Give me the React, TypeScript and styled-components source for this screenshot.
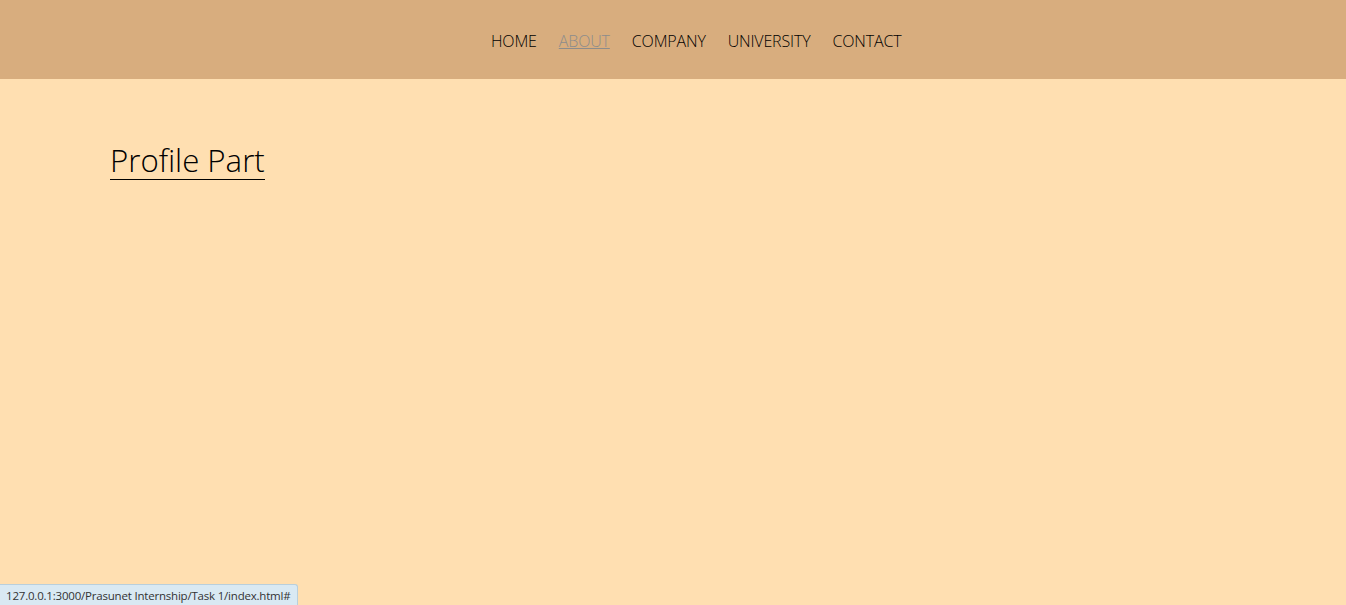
import React from "react";
import styled, { createGlobalStyle } from "styled-components";

const Global = createGlobalStyle`
  html, body { margin: 0; padding: 0; }
  body {
    background: #ffdfb1;
    font-family: "Open Sans", "Segoe UI", sans-serif;
    font-weight: 300;
    color: #000;
    min-height: 605px;
  }
`;

const Header = styled.header`
  height: 79px;
  background: #d8ad7e;
  display: flex;
  align-items: center;
  padding-left: 491px;
  box-sizing: border-box;
`;

const Nav = styled.nav`
  display: flex;
  gap: 22px;
  margin-top: 3px;
`;

const NavLink = styled.a<{ $active?: boolean }>`
  font-family: "Open Sans", sans-serif;
  font-weight: 300;
  font-size: 16px;
  letter-spacing: -0.15px;
  color: ${(p) => (p.$active ? "#8c8c8c" : "#000")};
  text-decoration: ${(p) => (p.$active ? "underline" : "none")};
  cursor: pointer;
`;

const Main = styled.main`
  padding: 62px 0 0 110px;
`;

const Title = styled.h1`
  display: inline-block;
  margin: 0;
  font-family: "Open Sans", sans-serif;
  font-weight: 300;
  font-size: 31.2px;
  letter-spacing: 0;
  line-height: 38px;
  border-bottom: 1px solid #000;
`;

const Status = styled.div`
  position: fixed;
  left: 0;
  bottom: 0;
  height: 20px;
  padding: 0 6px;
  display: flex;
  align-items: center;
  background: #d9e9f3;
  border: 1px solid #b9cfdc;
  border-left: none;
  border-bottom: none;
  border-top-right-radius: 3px;
  font-family: "Open Sans", sans-serif;
  font-weight: 400;
  font-size: 11.5px;
  letter-spacing: -0.2px;
  color: #333;
`;

export default function App() {
  return (
    <>
      <Global />
      <Header>
        <Nav>
          <NavLink>HOME</NavLink>
          <NavLink $active>ABOUT</NavLink>
          <NavLink>COMPANY</NavLink>
          <NavLink>UNIVERSITY</NavLink>
          <NavLink>CONTACT</NavLink>
        </Nav>
      </Header>
      <Main>
        <Title>Profile Part</Title>
      </Main>
      <Status>127.0.0.1:3000/Prasunet Internship/Task 1/index.html#</Status>
    </>
  );
}
